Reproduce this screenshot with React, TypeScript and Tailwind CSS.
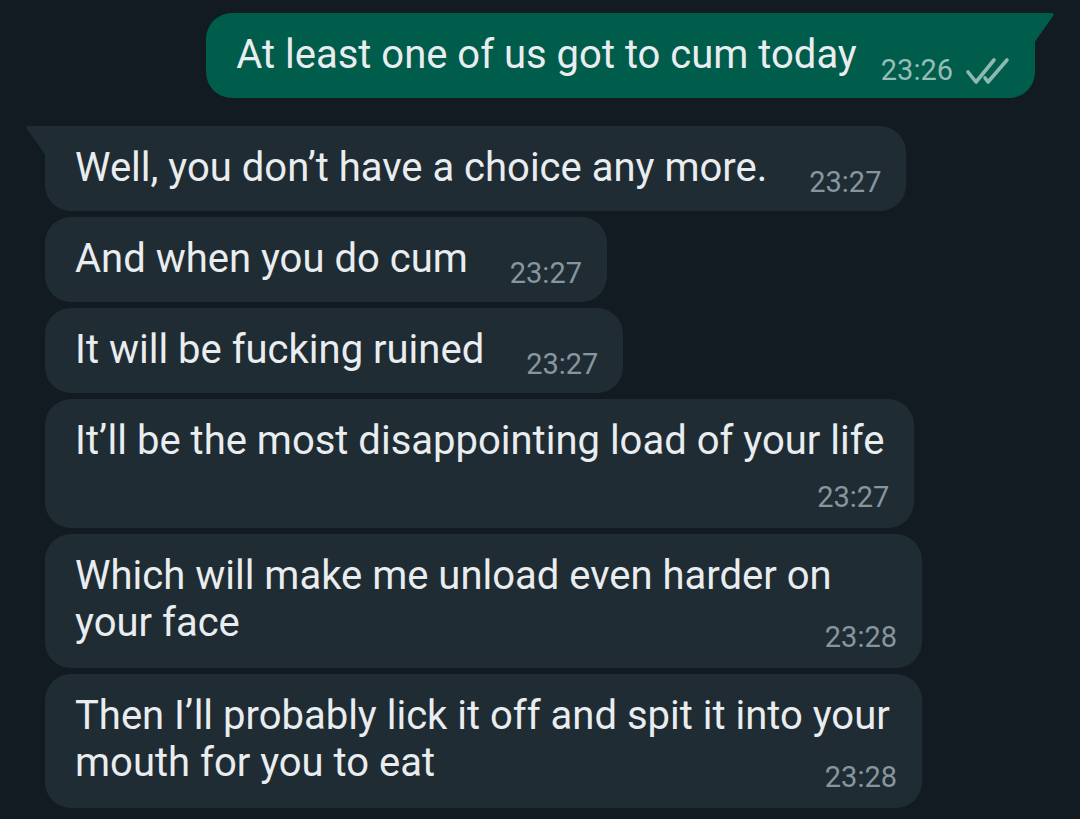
import React from 'react';

type Msg = {
  lines: string[];
  time: string;
  layout: 'inline' | 'below' | 'overlap';
  first?: boolean;
};

const incoming: Msg[] = [
  { lines: ['Well, you don’t have a choice any more.'], time: '23:27', layout: 'inline', first: true },
  { lines: ['And when you do cum'], time: '23:27', layout: 'inline' },
  { lines: ['It will be fucking ruined'], time: '23:27', layout: 'inline' },
  { lines: ['It’ll be the most disappointing load of your life'], time: '23:27', layout: 'below' },
  { lines: ['Which will make me unload even harder on', 'your face'], time: '23:28', layout: 'overlap' },
  { lines: ['Then I’ll probably lick it off and spit it into your', 'mouth for you to eat'], time: '23:28', layout: 'overlap' },
];

const font = { fontFamily: 'Roboto, "Noto Sans", sans-serif' };

const DoubleTick = () => (
  <svg width="45" height="28" viewBox="0 0 45 28" fill="none" stroke="#8dbab0" strokeWidth="3.6" strokeLinecap="round" strokeLinejoin="round">
    <path d="M3 15 L11 25 L29 3" />
    <path d="M20 21 L23 25 L42 3" />
  </svg>
);

const Bubble = ({ m }: { m: Msg }) => {
  const text = (
    <p className="text-[40px] leading-[47px] text-[#e9edef] whitespace-nowrap">
      {m.lines.map((l, i) => (
        <React.Fragment key={i}>
          {i > 0 && <br />}
          {l}
        </React.Fragment>
      ))}
    </p>
  );
  const ts = <span className="text-[29px] leading-[32px] text-[#8696a0] whitespace-nowrap">{m.time}</span>;

  const corner = m.first ? 'rounded-tl-none' : '';

  return (
    <div className="relative self-start">
      {m.first && (
        <svg className="absolute left-[-20px] top-0" width="21" height="31" viewBox="0 0 21 31">
          <path d="M21 0 H4 Q0 0 2 3 L21 30 Z" fill="#202c33" />
        </svg>
      )}
      {m.layout === 'inline' && (
        <div className={`flex items-end bg-[#202c33] rounded-[26px] ${corner} pl-[30px] pr-[25px] pt-[18px] pb-[12px]`}>
          <div className="mb-[8px]">{text}</div>
          <div className="ml-[42px]">{ts}</div>
        </div>
      )}
      {m.layout === 'below' && (
        <div className={`flex flex-col bg-[#202c33] rounded-[26px] ${corner} pl-[30px] pr-[25px] pt-[18px] pb-[14px]`}>
          <div className="pr-[5px]">{text}</div>
          <div className="self-end mt-[17px]">{ts}</div>
        </div>
      )}
      {m.layout === 'overlap' && (
        <div className={`flex flex-col w-[877px] bg-[#202c33] rounded-[26px] ${corner} pl-[30px] pr-[25px] pt-[18px] pb-[14px]`}>
          {text}
          <div className="self-end mt-[-25px]">{ts}</div>
        </div>
      )}
    </div>
  );
};

const App = () => {
  return (
    <div className="w-[1080px] h-[819px] bg-[#111b21] overflow-hidden flex flex-col pt-[13px] px-[45px]" style={font}>
      {/* sent */}
      <div className="relative self-end">
        <svg className="absolute right-[-20px] top-0" width="21" height="31" viewBox="0 0 21 31">
          <path d="M0 0 H17 Q21 0 19 3 L0 30 Z" fill="#005c4b" />
        </svg>
        <div className="flex items-end bg-[#005c4b] rounded-[26px] rounded-tr-none pl-[30px] pr-[25px] pt-[18px] pb-[12px]">
          <p className="mb-[8px] text-[40px] leading-[47px] text-[#e9edef] whitespace-nowrap">At least one of us got to cum today</p>
          <span className="ml-[24px] text-[29px] leading-[32px] text-[#95bdb5]">23:26</span>
          <span className="ml-[12px] mb-[1px]">
            <DoubleTick />
          </span>
        </div>
      </div>

      <div className="flex flex-col gap-[6px] mt-[28px]">
        {incoming.map((m, i) => (
          <Bubble key={i} m={m} />
        ))}
      </div>
    </div>
  );
};

export default App;
